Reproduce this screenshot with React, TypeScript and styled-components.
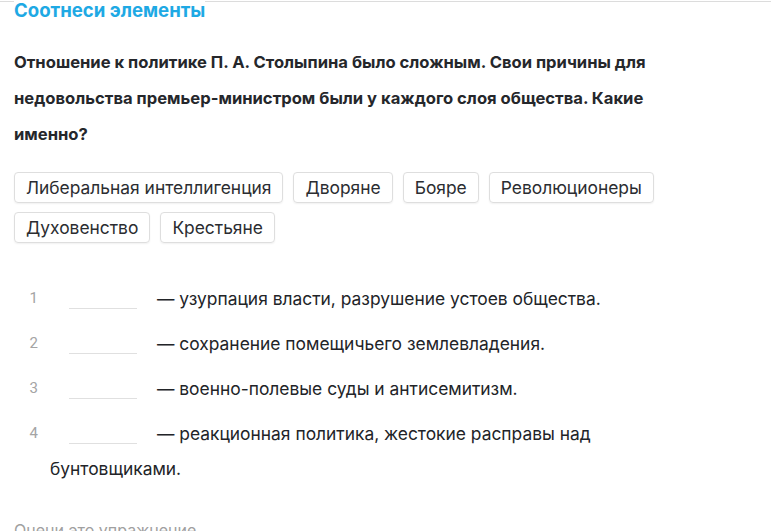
import React from 'react';
import styled, { createGlobalStyle } from 'styled-components';

const GlobalStyle = createGlobalStyle`
  html, body {
    margin: 0;
    padding: 0;
    background: #ffffff;
  }
  body {
    font-family: Inter, "Noto Sans", sans-serif;
    color: #222428;
  }
`

const Page = styled.div`
  position: relative;
  padding: 0 14px;
  border-top: 1px solid #dcdcdc;
  margin-top: 1px;
`

const Title = styled.h2`
  margin: -4px 0 0;
  font-size: 18.6px;
  line-height: 24px;
  font-weight: 700;
  color: #1ea9e4;
  background: #fff;
  width: max-content;
`

const Question = styled.p`
  margin: 22px 0 0;
  font-size: 16.6px;
  line-height: 36px;
  font-weight: 700;
  color: #25272b;
  max-width: 680px;
`

const Chips = styled.div`
  display: flex;
  flex-wrap: wrap;
  gap: 9px 10px;
  margin-top: 20px;
  max-width: 660px;
`

const Chip = styled.span`
  display: inline-flex;
  align-items: center;
  height: 31px;
  padding: 0 11px;
  border: 1px solid #dedede;
  border-radius: 4px;
  box-shadow: 0 1px 2px rgba(0, 0, 0, 0.06);
  font-size: 17.4px;
  color: #2b2d31;
  box-sizing: border-box;
`

const List = styled.ol`
  list-style: none;
  margin: 38px 0 0;
  padding: 0;
  display: flex;
  flex-direction: column;
  gap: 10px;
`

const Item = styled.li`
  display: flex;
  font-size: 17.4px;
  line-height: 35px;
  color: #222428;
`

const Num = styled.span`
  flex: 0 0 36px;
  text-align: right;
  padding-right: 12px;
  box-sizing: border-box;
  font-family: "Liberation Sans Narrow", "Roboto", sans-serif;
  font-size: 15px;
  color: #a4a4a4;
`

const Body = styled.span`
  flex: 1;
  max-width: 560px;
`

const Blank = styled.span`
  display: inline-block;
  width: 68px;
  height: 1px;
  margin: 0 20px 0 19px;
  vertical-align: -4px;
  background: #e0e0e0;
`

const Footer = styled.div`
  margin-top: 34px;
  font-size: 16px;
  color: #a0a0a0;
`

const chips = [
  'Либеральная интеллигенция',
  'Дворяне',
  'Бояре',
  'Революционеры',
  'Духовенство',
  'Крестьяне',
]

const items = [
  'узурпация власти, разрушение устоев общества.',
  'сохранение помещичьего землевладения.',
  'военно-полевые суды и антисемитизм.',
  'реакционная политика, жестокие расправы над бунтовщиками.',
]

export default function App() {
  return (
    <>
      <GlobalStyle />
      <Page>
        <Title>Соотнеси элементы</Title>
        <Question>
          Отношение к политике П. А. Столыпина было сложным. Свои причины для
          недовольства премьер-министром были у каждого слоя общества. Какие
          именно?
        </Question>
        <Chips>
          {chips.map((c) => (
            <Chip key={c}>{c}</Chip>
          ))}
        </Chips>
        <List>
          {items.map((t, i) => (
            <Item key={t}>
              <Num>{i + 1}</Num>
              <Body>
                <Blank />— {t}
              </Body>
            </Item>
          ))}
        </List>
        <Footer>Оцени это упражнение</Footer>
      </Page>
    </>
  )
}
